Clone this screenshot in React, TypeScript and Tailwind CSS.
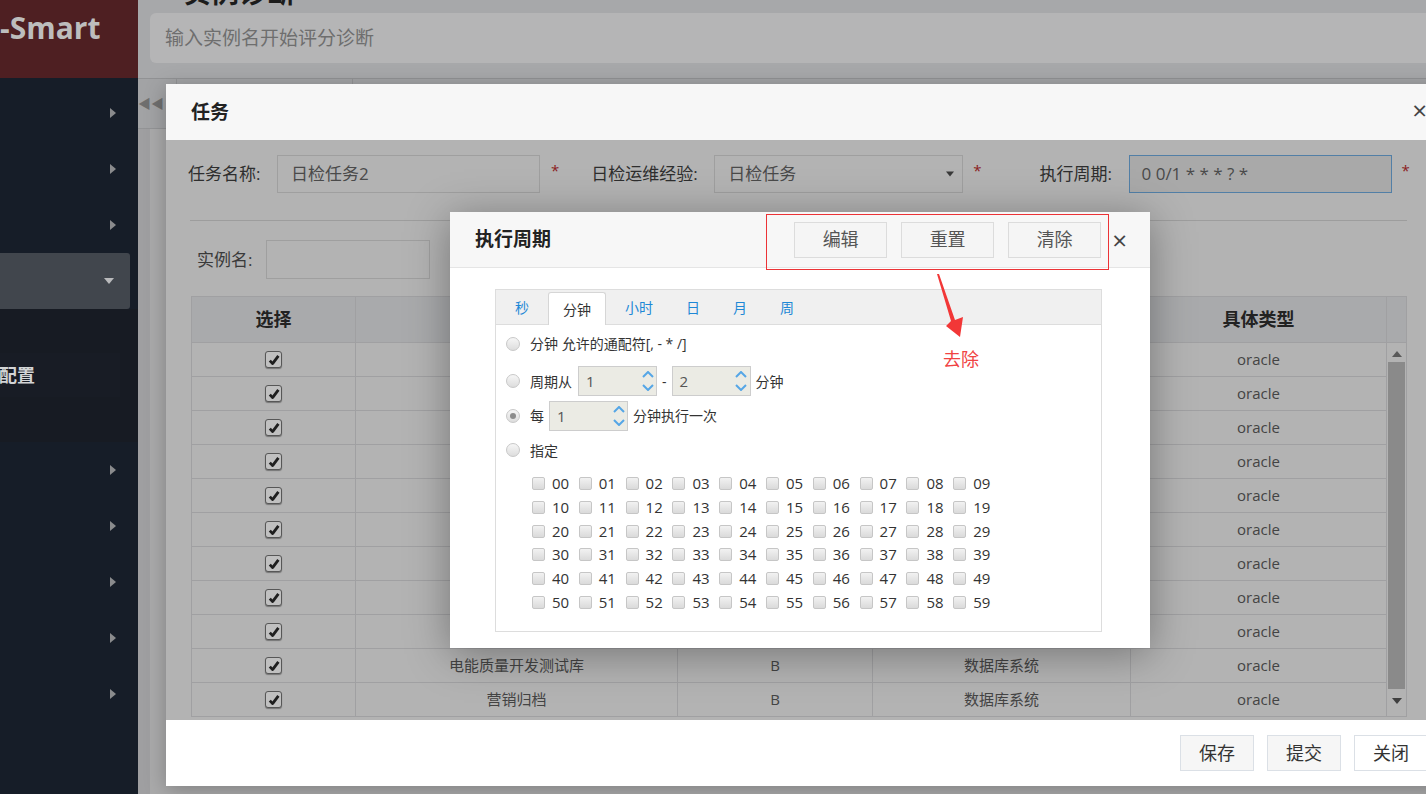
import React from 'react';

const rows = [
  '营销业务库',
  '用电信息采集',
  '电力交易平台',
  '财务管控系统',
  '生产管理系统',
  '数据中心主库',
  'ERP备库',
  '调度自动化库',
  '配网管理库',
  '电能质量开发测试库',
  '营销归档',
];

const minutes = Array.from({ length: 60 }, (_, i) => String(i).padStart(2, '0'));

function TriRight() {
  return (
    <svg width="6" height="10" viewBox="0 0 6 10">
      <path d="M0 0 L6 5 L0 10 Z" fill="#8a8b8d" />
    </svg>
  );
}

function TriDown({ color = '#b9babc', w = 10, h = 6 }: { color?: string; w?: number; h?: number }) {
  return (
    <svg width={w} height={h} viewBox="0 0 10 6">
      <path d="M0 0 L10 0 L5 6 Z" fill={color} />
    </svg>
  );
}

function TriUp({ color = '#595959' }: { color?: string }) {
  return (
    <svg width="10" height="6" viewBox="0 0 10 6">
      <path d="M0 6 L10 6 L5 0 Z" fill={color} />
    </svg>
  );
}

function TableCheck() {
  return (
    <span className="flex h-[17px] w-[17px] items-center justify-center rounded-[3px] border border-[#575757] bg-[#c0c0c0] shadow-[0_1px_1px_rgba(0,0,0,0.35)]">
      <svg viewBox="0 0 12 12" className="h-[12px] w-[12px]">
        <path d="M1.8 6.6 L4.6 9.6 L10.4 1.8" stroke="#1f1f1f" strokeWidth="2.8" fill="none" strokeLinejoin="round" />
      </svg>
    </span>
  );
}

function Radio({ checked = false }: { checked?: boolean }) {
  return (
    <span className="flex h-[14px] w-[14px] shrink-0 items-center justify-center rounded-full border border-[#c8c8c8] bg-gradient-to-b from-[#f6f6f6] to-[#dddddd]">
      {checked && <span className="h-[6px] w-[6px] rounded-full bg-[#8c8c8c]" />}
    </span>
  );
}

function Spinner({ value }: { value: string }) {
  return (
    <div className="flex h-[30px] w-[79px] border border-[#cdcdcd] bg-[#ebebe4]">
      <span className="flex-1 pl-[7px] text-[15px] leading-[28px] text-[#555]">{value}</span>
      <span className="flex w-[17px] flex-col items-center justify-center gap-[6px]">
        <svg width="12" height="7" viewBox="0 0 12 7">
          <path d="M1 6 L6 1 L11 6" stroke="#55a6e6" strokeWidth="2" fill="none" />
        </svg>
        <svg width="12" height="7" viewBox="0 0 12 7">
          <path d="M1 1 L6 6 L11 1" stroke="#55a6e6" strokeWidth="2" fill="none" />
        </svg>
      </span>
    </div>
  );
}

function Sidebar() {
  return (
    <aside className="flex w-[138px] shrink-0 flex-col bg-[#161d28]">
      <div className="h-[78px] overflow-hidden bg-[#4e1f22] pt-[10px]">
        <span className="whitespace-nowrap text-[30px] font-bold leading-[36px] text-[#bdbdbd]">-Smart</span>
      </div>
      <div className="h-[7px]" />
      {[0, 1, 2].map((i) => (
        <div key={i} className="flex h-[56px] items-center justify-end pr-[22px]">
          <TriRight />
        </div>
      ))}
      <div className="flex h-[56px] w-[130px] items-center justify-end rounded-r-[3px] bg-[#41464d] pr-[16px]">
        <TriDown />
      </div>
      <div className="flex h-[133px] flex-col bg-[#171b23]">
        <div className="h-[44px]" />
        <div className="flex h-[44px] w-[120px] items-center bg-[#181c25]">
          <span className="-ml-[1px] text-[18px] font-bold text-[#d2d3d5]">配置</span>
        </div>
        <div className="h-[45px]" />
      </div>
      {[0, 1, 2, 3, 4].map((i) => (
        <div key={i} className="flex h-[56px] items-center justify-end pr-[22px]">
          <TriRight />
        </div>
      ))}
    </aside>
  );
}

function TaskModal() {
  return (
    <div className="absolute left-[166px] top-[84px] flex h-[702px] w-[1290px] flex-col shadow-[0_4px_20px_rgba(0,0,0,0.25)]">
      {/* header */}
      <div className="relative flex h-[56px] items-center bg-[#f7f7f7] pl-[25px]">
        <span className="text-[19px] font-bold text-[#222]">任务</span>
        <span className="absolute right-[29px] top-[13px] text-[26px] leading-none text-[#444]">×</span>
      </div>

      {/* body */}
      <div className="relative h-[580px] bg-[#b3b3b3] pl-[25px]">
        <div className="-ml-[3px] mt-[15px] flex h-[38px] items-center text-[17px] text-[#2e2e2e]">
          <span className="w-[89px]">任务名称:</span>
          <div className="flex h-[38px] w-[263px] items-center border border-[#9f9f9f] pl-[13px] text-[#4a4a4a]">日检任务2</div>
          <span className="ml-[11px] self-start pt-[4px] text-[15px] text-[#8b1e1e]">*</span>
          <span className="ml-[32px] w-[123px]">日检运维经验:</span>
          <div className="flex h-[38px] w-[249px] items-center justify-between border border-[#9f9f9f] pl-[13px] pr-[8px] text-[#4a4a4a]">
            <span>日检任务</span>
            <TriDown color="#3a3a3a" w={8} h={6} />
          </div>
          <span className="ml-[10px] self-start pt-[4px] text-[15px] text-[#8b1e1e]">*</span>
          <span className="ml-[58px] w-[89px]">执行周期:</span>
          <div className="flex h-[38px] w-[263px] items-center border border-[#527fa6] bg-[#a9a9a9] pl-[12px] text-[#4a4a4a]">0 0/1 * * * ? *</div>
          <span className="ml-[10px] self-start pt-[4px] text-[15px] text-[#8b1e1e]">*</span>
        </div>

        <div className="-ml-[1px] mt-[27px] h-px w-[1217px] bg-[#9d9d9d]" />

        <div className="ml-[6px] mt-[19px] flex h-[39px] items-center text-[17px] text-[#3a3a3a]">
          <span className="w-[69px]">实例名:</span>
          <div className="h-[39px] w-[164px] border border-[#9f9f9f]" />
        </div>

        {/* table */}
        <div className="mt-[17px] w-[1216px] border border-[#a0a0a2] text-[15px] text-[#444]">
          <div className="flex h-[45px] bg-[#a9aaac] text-[18px] font-bold text-[#222]">
            <div className="flex w-[164px] items-center justify-center border-r border-[#a0a0a2]">选择</div>
            <div className="w-[322px] border-r border-[#a0a0a2]" />
            <div className="w-[195px] border-r border-[#a0a0a2]" />
            <div className="w-[258px] border-r border-[#a0a0a2]" />
            <div className="flex w-[256px] items-center justify-center border-r border-[#a0a0a2]">具体类型</div>
            <div className="flex-1" />
          </div>
          <div className="flex">
            <div className="w-[1195px]">
              {rows.map((name) => (
                <div key={name} className="flex h-[34px] border-t border-[#a0a0a2]">
                  <div className="flex w-[164px] items-center justify-center border-r border-[#a0a0a2]">
                    <TableCheck />
                  </div>
                  <div className="flex w-[322px] items-center justify-center border-r border-[#a0a0a2]">{name}</div>
                  <div className="flex w-[195px] items-center justify-center border-r border-[#a0a0a2]">B</div>
                  <div className="flex w-[258px] items-center justify-center border-r border-[#a0a0a2]">数据库系统</div>
                  <div className="flex w-[256px] items-center justify-center border-r border-[#a0a0a2]">oracle</div>
                </div>
              ))}
            </div>
            <div className="flex flex-1 flex-col items-center border-t border-[#a0a0a2] pt-[8px]">
              <TriUp />
              <div className="mt-[5px] h-[327px] w-[17px] bg-[#8a8a8a]" />
              <div className="mt-[9px]">
                <TriDown color="#3f3f3f" />
              </div>
            </div>
          </div>
        </div>
      </div>

      {/* footer */}
      <div className="flex h-[66px] items-center justify-end gap-[13px] bg-white pr-[28px] text-[18px] text-[#333]">
        <button className="h-[36px] w-[74px] border border-[#dbe0e6] bg-[#f6f6f6]">保存</button>
        <button className="h-[36px] w-[74px] border border-[#dbe0e6] bg-[#f6f6f6]">提交</button>
        <button className="h-[36px] w-[74px] border border-[#dbe0e6] bg-white">关闭</button>
      </div>

      <CronDialog />
    </div>
  );
}

function CronDialog() {
  const tabs = ['秒', '分钟', '小时', '日', '月', '周'];
  return (
    <div className="absolute left-[284px] top-[128px] flex h-[436px] w-[700px] flex-col bg-white shadow-[0_6px_40px_rgba(0,0,0,0.35)]">
      <div className="flex h-[56px] shrink-0 items-center border-b border-[#e5e5e5] bg-[#f7f7f7] pl-[25px] pr-[23px]">
        <span className="text-[19px] font-bold text-[#222]">执行周期</span>
        <div className="ml-auto flex gap-[14px] text-[18px] text-[#555]">
          {['编辑', '重置', '清除'].map((b) => (
            <button key={b} className="h-[36px] w-[93px] border border-[#dcdcdc] bg-[#f5f5f5]">
              {b}
            </button>
          ))}
        </div>
        <span className="ml-[11px] text-[26px] leading-none text-[#444]">×</span>
      </div>

      <div className="pl-[45px] pt-[21px]">
        <div className="h-[343px] w-[607px] border border-[#dddddd] text-[14px] text-[#333]">
          <div className="flex h-[35px] items-end gap-[5px] border-b border-[#dddddd] bg-[#f0f0f0] pl-[5px]">
            {tabs.map((t, i) => (
              <span
                key={t}
                className={
                  i === 1
                    ? '-mb-px flex h-[33px] items-center rounded-t-[3px] border border-b-0 border-[#d6d6d6] bg-white px-[14px] text-[#333]'
                    : 'flex h-[33px] items-center px-[14px] text-[#1e88d6]'
                }
              >
                {t}
              </span>
            ))}
          </div>

          <div className="pl-[10px]">
            <div className="flex h-[37px] items-center gap-[10px]">
              <Radio />
              <span>分钟 允许的通配符[, - * /]</span>
            </div>
            <div className="flex h-[38px] items-center">
              <Radio />
              <span className="ml-[10px]">周期从</span>
              <span className="ml-[6px]">
                <Spinner value="1" />
              </span>
              <span className="mx-[5px]">-</span>
              <Spinner value="2" />
              <span className="ml-[5px]">分钟</span>
            </div>
            <div className="flex h-[31px] items-center">
              <Radio checked />
              <span className="ml-[10px]">每</span>
              <span className="ml-[5px]">
                <Spinner value="1" />
              </span>
              <span className="ml-[5px]">分钟执行一次</span>
            </div>
            <div className="flex h-[38px] items-center gap-[10px]">
              <Radio />
              <span>指定</span>
            </div>

            <div className="ml-[26px] mt-[3px] grid w-[468px] grid-cols-10">
              {minutes.map((m) => (
                <div key={m} className="flex h-[23.7px] items-center">
                  <span className="h-[13px] w-[13px] shrink-0 rounded-[2px] border border-[#c6c6c6] bg-gradient-to-b from-[#f2f2f2] to-[#dadada]" />
                  <span className="ml-[7px] text-[15px] leading-none text-[#333]">{m}</span>
                </div>
              ))}
            </div>
          </div>
        </div>
      </div>

      {/* annotation */}
      <div className="absolute left-[316px] top-[2px] h-[56px] w-[343px] border border-[#ec3336]" />
      <svg className="absolute left-[480px] top-[58px]" width="40" height="72" viewBox="0 0 40 72">
        <path d="M7 4 L9 4 L25 50 L33 47 L30 67 L16 56 L21 51 Z" fill="#f23737" />
      </svg>
      <span className="absolute left-[493px] top-[134px] text-[18px] text-[#f04343]">去除</span>
    </div>
  );
}

export default function App() {
  return (
    <div className="relative flex h-[794px] w-[1426px] overflow-hidden font-['Open_Sans','Noto_Sans_CJK_SC',sans-serif]">
      <Sidebar />
      <main className="flex flex-1 flex-col bg-[#a1a2a4]">
        <div className="h-[78px] bg-[#a7a8aa] pl-[12px]">
          <div className="h-[9px] overflow-hidden pl-[33px]">
            <div className="-mt-[25px] text-[28px] font-bold leading-[34px] text-[#1c1c1c]">实例诊断</div>
          </div>
          <div className="mt-[4px] flex h-[50px] items-center rounded-l-[6px] bg-[#b5b5b6] pl-[15px] text-[19px] text-[#6e6e6e]">
            输入实例名开始评分诊断
          </div>
        </div>
        <div className="flex h-[50px] border-t border-[#919294] bg-[#a2a3a5]">
          <div className="flex w-[38px] items-center justify-end pr-[12px] text-[13px] text-[#6f6f6f]">◀◀</div>
          <div className="w-[177px] border-l border-r border-[#929395]" />
        </div>
        <div className="flex flex-1 border-t border-[#939496] bg-[#9f9fa1] pl-[12px]">
          <div className="flex-1 bg-[#aaaaab]" />
        </div>
      </main>
      <TaskModal />
    </div>
  );
}
